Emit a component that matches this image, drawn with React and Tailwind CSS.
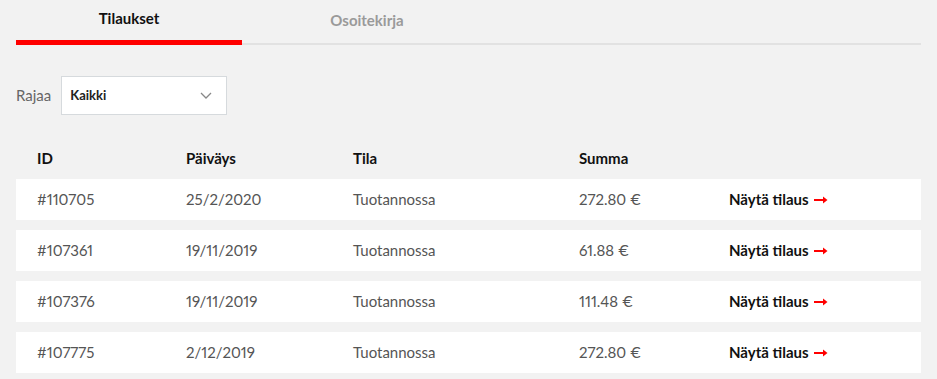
import React, { useState } from 'react';

const orders = [
  { id: '#110705', date: '25/2/2020', status: 'Tuotannossa', sum: '272.80 €' },
  { id: '#107361', date: '19/11/2019', status: 'Tuotannossa', sum: '61.88 €' },
  { id: '#107376', date: '19/11/2019', status: 'Tuotannossa', sum: '111.48 €' },
  { id: '#107775', date: '2/12/2019', status: 'Tuotannossa', sum: '272.80 €' },
];

const ArrowRight = () => (
  <svg width="14" height="8" viewBox="0 0 14 8" className="ml-[5px]">
    <path d="M0 4h10" stroke="#ff0000" strokeWidth="2" />
    <path d="M9 0.5L13.5 4L9 7.5z" fill="#ff0000" />
  </svg>
);

const App = () => {
  const [tab, setTab] = useState('orders');

  return (
    <div className="min-h-screen w-[937px] bg-[#f2f2f2] font-['Lato',sans-serif] text-[15px] proportional-nums">
      {/* Tabs */}
      <div className="mx-[16px] flex h-[45px] border-b-2 border-[#e2e2e2]">
        <button
          onClick={() => setTab('orders')}
          className={`w-[226px] h-[45px] -mb-[2px] pb-[4px] text-[15px] font-bold ${tab === 'orders' ? 'text-[#111] border-b-[5px] border-[#ff0000]' : 'text-[#9a9a9a]'}`}
        >
          Tilaukset
        </button>
        <button
          onClick={() => setTab('addresses')}
          className={`w-[238px] h-[45px] pb-[5px] pl-[12px] text-[15px] font-bold ${tab === 'addresses' ? 'text-[#111]' : 'text-[#9a9a9a]'}`}
        >
          Osoitekirja
        </button>
      </div>

      {/* Filter */}
      <div className="mt-[31px] ml-[16px] flex items-center gap-[10px]">
        <span className="text-[#666] text-[15px]">Rajaa</span>
        <div className="w-[166px] h-[39px] bg-white border border-[#d6dadd] flex items-center justify-between pl-[8px] pr-[14px]">
          <span className="text-[13px] font-bold text-[#222]">Kaikki</span>
          <svg width="12" height="7" viewBox="0 0 12 7" fill="none">
            <path d="M1 1l5 5 5-5" stroke="#888" strokeWidth="1.3" />
          </svg>
        </div>
      </div>

      {/* Table */}
      <div className="mx-[16px] mt-[32px]">
        <div className="grid grid-cols-[149px_167px_226px_150px_1fr] pl-[21px] h-[32px] items-start text-[15px] font-bold text-[#111]">
          <div>ID</div>
          <div>Päiväys</div>
          <div>Tila</div>
          <div>Summa</div>
          <div></div>
        </div>
        <div className="flex flex-col gap-[10px]">
          {orders.map((o) => (
            <div
              key={o.id}
              className="grid grid-cols-[149px_167px_226px_150px_1fr] pl-[21px] h-[41px] items-center bg-white text-[#555]"
            >
              <div>{o.id}</div>
              <div>{o.date}</div>
              <div>{o.status}</div>
              <div>{o.sum}</div>
              <div className="flex items-center text-[15px] font-bold text-[#111]">
                Näytä tilaus
                <ArrowRight />
              </div>
            </div>
          ))}
        </div>
      </div>
    </div>
  );
};

export default App;
